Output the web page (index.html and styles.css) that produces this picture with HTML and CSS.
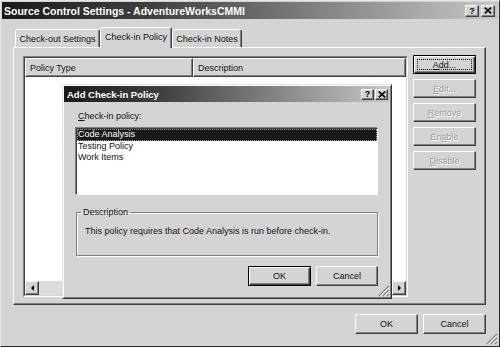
FILE: index.html
```html
<!DOCTYPE html>
<html lang="en">
<head>
  <meta charset="UTF-8" />
  <title>Source Control Settings - AdventureWorksCMMI</title>
  <link rel="stylesheet" href="styles.css">
</head>
<body>
  <div class="window">
    <div class="titlebar">
      <span>Source Control Settings - AdventureWorksCMMI</span>
      <div class="caption-btns">
        <span class="cbtn">?</span>
        <span class="cbtn"><svg width="8" height="7" viewBox="0 0 8 7"><path d="M0.8 0.6L7.2 6.4M7.2 0.6L0.8 6.4" stroke="#000" stroke-width="1.7"/></svg></span>
      </div>
    </div>

    <div class="content">
      <div class="tabs">
        <div class="tab tab-out">Check-out Settings</div>
        <div class="tab tab-policy active">Check-in Policy</div>
        <div class="tab tab-notes">Check-in Notes</div>
      </div>

      <div class="panel">
        <div class="listview">
          <div class="lv-inner">
            <div class="lv-header">
              <div class="col col-type">Policy Type</div>
              <div class="col col-desc">Description</div>
            </div>
            <div class="lv-body"></div>
            <div class="hscroll">
              <span class="sbtn"><i class="arrow-left"></i></span>
              <span class="track"></span>
              <span class="sbtn"><i class="arrow-right"></i></span>
            </div>
          </div>
        </div>

        <div class="side-btns">
          <button class="btn default"><span class="focus-rect"><u>A</u>dd...</span></button>
          <button class="btn disabled"><span><u>E</u>dit...</span></button>
          <button class="btn disabled"><span><u>R</u>emove</span></button>
          <button class="btn disabled"><span>En<u>a</u>ble</span></button>
          <button class="btn disabled"><span><u>D</u>isable</span></button>
        </div>
      </div>

      <div class="footer">
        <button class="btn">OK</button>
        <button class="btn">Cancel</button>
      </div>
    </div>

    <svg class="grip" width="12" height="12" viewBox="0 0 12 12">
      <path d="M11 1L1 11M11 5L5 11M11 9L9 11" stroke="#808080" stroke-width="1.3"/>
      <path d="M11 2.5L2.5 11M11 6.5L6.5 11M11 10.5L10.5 11" stroke="#fff"/>
    </svg>

    <!-- modal dialog on top of the list view -->
    <div class="dialog">
      <div class="titlebar dlg-title">
        <span>Add Check-in Policy</span>
        <div class="caption-btns">
          <span class="cbtn">?</span>
          <span class="cbtn"><svg width="8" height="7" viewBox="0 0 8 7"><path d="M0.8 0.6L7.2 6.4M7.2 0.6L0.8 6.4" stroke="#000" stroke-width="1.7"/></svg></span>
        </div>
      </div>

      <div class="dlg-body">
        <div class="dlg-label"><u>C</u>heck-in policy:</div>
        <div class="listbox">
          <div class="item sel">Code Analysis</div>
          <div class="item">Testing Policy</div>
          <div class="item">Work Items</div>
        </div>

        <fieldset class="group">
          <legend>Description</legend>
          This policy requires that Code Analysis is run before check-in.
        </fieldset>

        <div class="dlg-footer">
          <button class="btn default">OK</button>
          <button class="btn btn-cancel">Cancel</button>
        </div>
      </div>

      <svg class="grip dlg-grip" width="12" height="12" viewBox="0 0 12 12">
        <path d="M11 1L1 11M11 5L5 11M11 9L9 11" stroke="#808080" stroke-width="1.3"/>
        <path d="M11 2.5L2.5 11M11 6.5L6.5 11M11 10.5L10.5 11" stroke="#fff"/>
      </svg>
    </div>
  </div>
</body>
</html>
```

FILE: styles.css
```css
* {
  box-sizing: border-box;
}

body {
  margin: 0;
  background: #d4d4d4;
  font-family: "Liberation Sans", Arial, sans-serif;
  font-size: 9px;
  color: #111;
}

.window {
  position: relative;
  width: 500px;
  height: 347px;
  border: 1px solid;
  border-color: #e6e6e6 #2a2a2a #2a2a2a #e6e6e6;
  padding: 1px;
  background: #d4d4d4;
}

.titlebar {
  height: 17px;
  display: flex;
  align-items: center;
  justify-content: space-between;
  padding: 0 3px 0 2px;
  background: linear-gradient(to right, #1a1a1a, #404040 30%, #c8c8c8);
  color: #fff;
  font-weight: bold;
  font-size: 10.5px;
}

.caption-btns {
  display: flex;
  gap: 2px;
}

.cbtn {
  width: 14px;
  height: 12px;
  display: flex;
  align-items: center;
  justify-content: center;
  background: #d4d4d4;
  border: 1px solid;
  border-color: #fff #404040 #404040 #fff;
  box-shadow: inset -1px -1px #808080;
  color: #000;
  font-size: 9px;
  font-weight: bold;
}

.content {
  padding: 8px 0 0 11px;
}

/* tabs */
.tabs {
  display: flex;
  align-items: flex-end;
  height: 21px;
  padding-left: 2px;
  margin-bottom: -1px;
  position: relative;
  z-index: 1;
}

.tab {
  height: 18px;
  margin-bottom: 1px;
  display: flex;
  align-items: center;
  justify-content: center;
  background: #d4d4d4;
  border: 1px solid;
  border-bottom: none;
  border-color: #fff #404040 transparent #fff;
  box-shadow: inset -1px 0 #808080;
  border-radius: 2px 2px 0 0;
  padding-top: 1px;
}

.tab-out { width: 85px; }
.tab-policy { width: 72px; }
.tab-notes { width: 70px; }

.tab.active {
  height: 21px;
  margin-bottom: 0;
  padding-top: 0;
  padding-bottom: 2px;
}

.panel {
  width: 473px;
  height: 258px;
  display: flex;
  align-items: flex-start;
  gap: 5px;
  padding: 8px 0 0 9px;
  border: 1px solid;
  border-color: #fff #404040 #404040 #fff;
  box-shadow: inset -1px -1px #808080;
}

/* list view */
.listview {
  width: 385px;
  height: 241px;
  border: 1px solid;
  border-color: #808080 #fff #fff #808080;
}

.lv-inner {
  height: 100%;
  display: flex;
  flex-direction: column;
  background: #fff;
  border: 1px solid;
  border-color: #404040 #d4d4d4 #d4d4d4 #404040;
}

.lv-header {
  display: flex;
  height: 19px;
  background: #d4d4d4;
}

.col {
  display: flex;
  align-items: center;
  padding-left: 4px;
  border: 1px solid;
  border-color: #fff #404040 #404040 #fff;
  box-shadow: inset -1px -1px #808080;
}

.col-type { width: 168px; }
.col-desc { flex: 1; }

.lv-body {
  flex: 1;
}

.hscroll {
  display: flex;
  height: 14px;
  background: #dcdcdc;
}

.sbtn {
  width: 14px;
  height: 14px;
  display: flex;
  align-items: center;
  justify-content: center;
  background: #d4d4d4;
  border: 1px solid;
  border-color: #fff #404040 #404040 #fff;
  box-shadow: inset -1px -1px #808080;
}

.track {
  flex: 1;
}

.arrow-left {
  border-right: 3px solid #000;
  border-top: 3px solid transparent;
  border-bottom: 3px solid transparent;
}

.arrow-right {
  border-left: 3px solid #000;
  border-top: 3px solid transparent;
  border-bottom: 3px solid transparent;
}

/* buttons */
.side-btns {
  display: flex;
  flex-direction: column;
  gap: 5px;
  margin-top: -1px;
}

.btn {
  width: 63px;
  height: 19px;
  padding: 0;
  display: flex;
  align-items: center;
  justify-content: center;
  font: inherit;
  color: #111;
  background: #d4d4d4;
  border: 1px solid;
  border-color: #fff #404040 #404040 #fff;
  box-shadow: inset -1px -1px #808080;
}

.btn.default {
  border-color: #000;
  box-shadow: inset 1px 1px #fff, inset -1px -1px #404040, inset -2px -2px #808080;
}

.btn.disabled {
  color: #9a9a9a;
  text-shadow: 1px 1px #fff;
}

.focus-rect {
  width: 55px;
  height: 11px;
  display: flex;
  align-items: center;
  justify-content: center;
  border: 1px dotted #000;
}

.footer {
  width: 473px;
  display: flex;
  justify-content: flex-end;
  gap: 5px;
  margin-top: 9px;
}

.footer .btn {
  height: 20px;
}

.grip {
  position: absolute;
  right: 1px;
  bottom: 1px;
}

/* add check-in policy dialog */
.dialog {
  position: absolute;
  left: 61px;
  top: 83px;
  width: 330px;
  height: 215px;
  padding: 1px;
  background: #d4d4d4;
  border: 1px solid;
  border-color: #e0e0e0 #303030 #303030 #e0e0e0;
  box-shadow: inset 1px 1px #fff, inset -1px -1px #808080;
}

.dlg-title {
  height: 16px;
  padding: 0 2px 0 3px;
  font-size: 9.5px;
}

.dlg-title .caption-btns {
  gap: 1px;
}

.dlg-title .cbtn {
  width: 13px;
  height: 11px;
}

.dlg-body {
  padding: 0 12px;
}

.dlg-label {
  margin: 8px 0 0 2px;
  line-height: 12px;
}

.listbox {
  height: 67px;
  margin-top: 6px;
  background: #fff;
  border: 1px solid;
  border-color: #404040 #fff #fff #404040;
  box-shadow: -1px -1px #808080;
}

.item {
  line-height: 11.5px;
  padding-left: 1px;
}

.item.sel {
  background: #1a1a1a;
  color: #fff;
  outline: 1px dotted #9a9a9a;
  outline-offset: -1px;
}

.group {
  height: 50px;
  margin: 11px 0 0;
  min-width: 0;
  padding: 7px 8px 0;
  border: 1px solid #808080;
  box-shadow: inset 1px 1px #fff, 1px 1px #fff;
  line-height: 12px;
}

.group legend {
  margin-left: -4px;
  padding: 0 2px;
  line-height: 12px;
}

.dlg-footer {
  display: flex;
  justify-content: flex-end;
  gap: 5px;
  margin-top: 10px;
}

.dlg-footer .btn {
  height: 20px;
}

.dlg-footer .btn-cancel {
  width: 62px;
}

.dlg-grip {
  right: 1px;
  bottom: 1px;
}
```
